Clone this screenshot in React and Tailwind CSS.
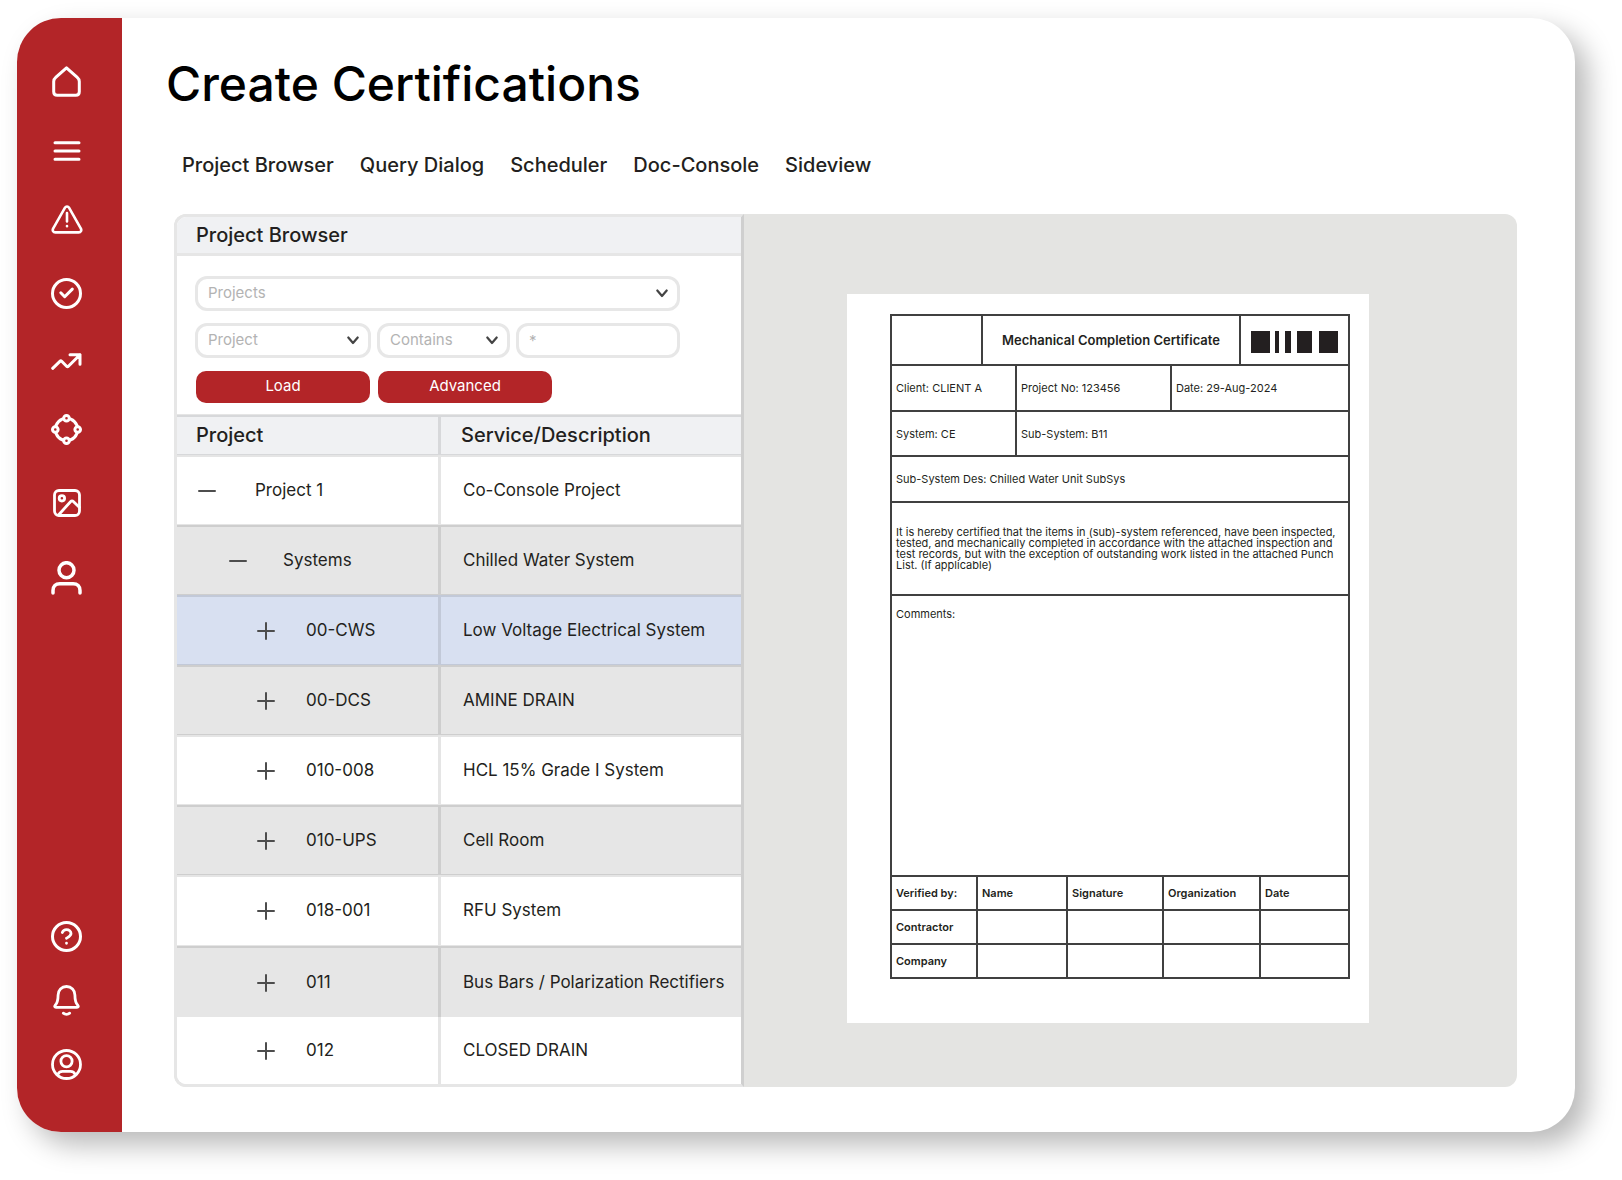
import React, { useState } from "react";

const HomeIcon = () => (
  <svg width="29" height="31" viewBox="0 0 29 31" fill="none" stroke="currentColor" strokeWidth="3" strokeLinecap="round" strokeLinejoin="round">
    <path d="M14.5 1.8 4 11.2c-1.6 1.4-2.3 2.6-2.3 4.4v10.2c0 2.2 1.3 3.5 3.5 3.5h18.6c2.2 0 3.5-1.3 3.5-3.5V15.6c0-1.8-.7-3-2.3-4.4Z" />
  </svg>
);

const MenuIcon = () => (
  <svg width="28" height="20" viewBox="0 0 28 20" fill="none" stroke="currentColor" strokeWidth="3" strokeLinecap="round">
    <path d="M2 1.7h24M2 10h24M2 18.3h24" />
  </svg>
);

const WarningIcon = () => (
  <svg width="32" height="29" viewBox="0 0 32 29" fill="none" stroke="currentColor" strokeWidth="2.6" strokeLinecap="round" strokeLinejoin="round">
    <path d="M14 2.7c.9-1.6 3.1-1.6 4 0l11.9 21c.9 1.800 0 3.700-2.200 3.700H4.300c-2.200 0-3.100-1.900-2.200-3.700Z" />
    <path d="M16 8v8.5M16 21v.3" />
  </svg>
);

const CheckIcon = () => (
  <svg width="31" height="31" viewBox="0 0 31 31" fill="none" stroke="currentColor" strokeWidth="3" strokeLinecap="round" strokeLinejoin="round">
    <circle cx="15.5" cy="15.5" r="14" />
    <path d="m9.8 14.8 3.900 3.900 7.600-7.600" />
  </svg>
);

const TrendIcon = () => (
  <svg width="31" height="17" viewBox="0 0 31 17" fill="none" stroke="currentColor" strokeWidth="3" strokeLinecap="round" strokeLinejoin="round">
    <path d="m1.7 15.3 7.2-7c.6-.6 1.200-.6 1.800 0l4.900 5c.6.6 1.200.6 1.800 0L29 1.700M19 1.700h10v9.600" />
  </svg>
);

const NetworkIcon = () => (
  <svg width="31" height="31" viewBox="0 0 31 31" fill="none" stroke="currentColor" strokeWidth="3">
    <circle cx="15.5" cy="15.5" r="11.2" />
    <g fill="#b32528">
      <circle cx="15.5" cy="4.3" r="2.8" />
      <circle cx="26.7" cy="15.5" r="2.8" />
      <circle cx="15.5" cy="26.7" r="2.8" />
      <circle cx="4.3" cy="15.5" r="2.8" />
    </g>
  </svg>
);

const ImageIcon = () => (
  <svg width="28" height="28" viewBox="0 0 28 28" fill="none" stroke="currentColor" strokeWidth="2.8" strokeLinecap="round" strokeLinejoin="round">
    <rect x="1.5" y="1.5" width="25" height="25" rx="4.5" />
    <circle cx="8.9" cy="9.3" r="2.7" />
    <path d="m5.5 26 12-13.3c1-1.1 2-1.1 3.100 0l5.700 5.600" />
  </svg>
);

const UserIcon = () => (
  <svg width="31" height="34" viewBox="0 0 31 34" fill="none" stroke="currentColor" strokeWidth="3.5" strokeLinecap="round">
    <circle cx="15.5" cy="9.2" r="7.5" />
    <path d="M2 32v-2.500C2 25.300 4.600 22.700 8.800 22.700h13.400c4.200 0 6.800 2.600 6.800 6.800V32" />
  </svg>
);

const HelpIcon = () => (
  <svg width="31" height="31" viewBox="0 0 31 31" fill="none" stroke="currentColor" strokeWidth="3" strokeLinecap="round">
    <circle cx="15.5" cy="15.5" r="14" />
    <path d="M11.3 11.5c.8-1.900 2.300-2.900 4.200-2.900 2.600 0 4.500 1.600 4.500 4 0 2.300-2 3.200-4.500 4.600M15.500 22.200v.1" strokeWidth="2.8" />
  </svg>
);

const BellIcon = () => (
  <svg width="27" height="31" viewBox="0 0 27 31" fill="none" stroke="currentColor" strokeWidth="2.8" strokeLinecap="round" strokeLinejoin="round">
    <path d="M13.500 1.500c-4.900 0-8.400 3.600-8.400 8.400 0 5.200-.6 7.800-2.900 10.400-.9 1.100-.5 2 .8 2h21c1.300 0 1.700-.9.800-2-2.300-2.600-2.900-5.200-2.900-10.400 0-4.800-3.500-8.400-8.400-8.400Z" />
    <path d="M10.300 28.200c1.800 1.500 4.600 1.500 6.400 0" />
  </svg>
);

const AccountIcon = () => (
  <svg width="31" height="31" viewBox="0 0 31 31" fill="none" stroke="currentColor" strokeWidth="2.8" strokeLinecap="round">
    <circle cx="15.5" cy="15.5" r="14" />
    <circle cx="15.5" cy="12.2" r="5.6" />
    <path d="M6.800 25.500c.9-2.200 2.400-3.200 4.700-3.200h8c2.300 0 3.800 1 4.700 3.200" />
  </svg>
);

const topIcons = [
  { name: "Home", Icon: HomeIcon },
  { name: "Menu", Icon: MenuIcon },
  { name: "Alerts", Icon: WarningIcon },
  { name: "Completed", Icon: CheckIcon },
  { name: "Trends", Icon: TrendIcon },
  { name: "Network", Icon: NetworkIcon },
  { name: "Images", Icon: ImageIcon },
  { name: "Users", Icon: UserIcon },
];

const bottomIcons = [
  { name: "Help", Icon: HelpIcon },
  { name: "Notifications", Icon: BellIcon },
  { name: "Account", Icon: AccountIcon },
];

const tabs = ["Project Browser", "Query Dialog", "Scheduler", "Doc-Console", "Sideview"];

const rows = [
  { level: 0, open: true, name: "Project 1", description: "Co-Console Project" },
  { level: 1, open: true, name: "Systems", description: "Chilled Water System" },
  { level: 2, open: false, name: "00-CWS", description: "Low Voltage Electrical System" },
  { level: 2, open: false, name: "00-DCS", description: "AMINE DRAIN" },
  { level: 2, open: false, name: "010-008", description: "HCL 15% Grade I System" },
  { level: 2, open: false, name: "010-UPS", description: "Cell Room" },
  { level: 2, open: false, name: "018-001", description: "RFU System" },
  { level: 2, open: false, name: "011", description: "Bus Bars / Polarization Rectifiers" },
  { level: 2, open: false, name: "012", description: "CLOSED DRAIN" },
];

const levelStyles = [
  "pl-[21px] gap-[39px]",
  "pl-[52px] gap-[36px]",
  "pl-[80px] gap-[31px]",
];

const Sidebar = () => (
  <aside className="flex w-[105px] shrink-0 flex-col justify-between bg-[#b32528] pt-[48px] pr-[6px] pb-[52px] text-white">
    <nav className="flex flex-col items-center gap-[44px]">
      {topIcons.map(({ name, Icon }) => (
        <button key={name} type="button" aria-label={name}>
          <Icon />
        </button>
      ))}
    </nav>
    <div className="flex flex-col items-center gap-[33px]">
      {bottomIcons.map(({ name, Icon }) => (
        <button key={name} type="button" aria-label={name}>
          <Icon />
        </button>
      ))}
    </div>
  </aside>
);

const SelectBox = ({ label, option, className }) => (
  <div className={`relative ${className}`}>
    <select
      aria-label={label}
      className="h-[35px] w-full appearance-none rounded-xl border-[3px] border-[#e7e7e7] bg-white pb-px pl-[10px] text-[15px] text-[#b3b3b3]"
    >
      <option>{option}</option>
    </select>
    <svg
      className="pointer-events-none absolute top-[13px] right-[12px]"
      width="12"
      height="9"
      viewBox="0 0 12 9"
      fill="none"
      stroke="#444"
      strokeWidth="2.2"
      strokeLinecap="round"
      strokeLinejoin="round"
    >
      <path d="m1.300 1.500 4.700 5.500 4.700-5.500" />
    </svg>
  </div>
);

const Filters = () => (
  <form
    className="border-b border-black/10 pt-5 pr-[61px] pb-[11px] pl-[18px]"
    onSubmit={(e) => e.preventDefault()}
  >
    <SelectBox label="Projects" option="Projects" className="w-full" />
    <div className="mt-3 flex gap-[6px]">
      <SelectBox label="Field" option="Project" className="w-[176px]" />
      <SelectBox label="Condition" option="Contains" className="w-[133px]" />
      <input
        type="text"
        aria-label="Value"
        placeholder="*"
        className="h-[35px] min-w-0 flex-1 rounded-xl border-[3px] border-[#e7e7e7] pb-px pl-[10px] text-[15px] placeholder:text-[#b3b3b3]"
      />
    </div>
    <div className="mt-[13px] flex gap-2 pl-px text-[15px] text-white">
      <button type="submit" className="h-8 w-[174px] rounded-[10px] bg-[#b32528] pb-[2px]">
        Load
      </button>
      <button type="button" className="h-8 w-[174px] rounded-[10px] bg-[#b32528] pb-[2px]">
        Advanced
      </button>
    </div>
  </form>
);

const ProjectTable = () => {
  const [selected, setSelected] = useState("00-CWS");

  const rowColor = (name, index) => {
    if (name === selected) return "bg-[#d8e0f1]";
    return index % 2 === 1 ? "bg-[#e6e6e6]" : "bg-white";
  };

  // the last two rows meet without a line between them
  const rowLine = (index) => {
    if (index === rows.length - 1) return "h-[67px]";
    if (index === rows.length - 2) return "h-[71px] border-t-2";
    if (index === rows.length - 3) return "h-[71px] border-t-2 border-b";
    return "h-[70px] border-t-2 border-b";
  };

  return (
    <table className="w-full table-fixed border-separate border-spacing-0 text-left">
      <thead>
        <tr className="h-[40px] bg-[#f0f1f3] text-[20px] leading-6">
          <th className="w-[264px] border-t-2 border-r-[3px] border-b border-black/10 pb-[2px] pl-[19px] font-medium">
            Project
          </th>
          <th className="border-t-2 border-b border-black/10 pb-[2px] pl-[20px] font-medium">
            Service/Description
          </th>
        </tr>
      </thead>
      <tbody>
        {rows.map((row, index) => {
          const line = rowLine(index);
          const color = rowColor(row.name, index);
          return (
            <tr key={row.name} className="text-[17px]" onClick={() => setSelected(row.name)}>
              <td className={`border-r-[3px] border-black/10 ${line} ${color}`}>
                <div className={`flex items-center ${levelStyles[row.level]}`}>
                  <button type="button" aria-label={row.open ? "Collapse" : "Expand"}>
                    <svg width="18" height="18" viewBox="0 0 18 18" stroke="#4d4d4d" strokeWidth="2" strokeLinecap="round">
                      <path d={row.open ? "M1 9h16" : "M1 9h16M9 1v16"} />
                    </svg>
                  </button>
                  <span>{row.name}</span>
                </div>
              </td>
              <td className={`border-black/10 pl-[22px] whitespace-nowrap ${line} ${color}`}>
                {row.description}
              </td>
            </tr>
          );
        })}
      </tbody>
    </table>
  );
};

const Barcode = () => (
  <svg width="87" height="22" viewBox="0 0 87 22" fill="#231f20">
    <rect x="0" width="19" height="22" />
    <rect x="24" width="4" height="22" />
    <rect x="34" width="6" height="22" />
    <rect x="46" width="15" height="22" />
    <rect x="68" width="19" height="22" />
  </svg>
);

const Certificate = () => (
  <article className="bg-white pt-5 pr-[19px] pb-[44px] pl-[43px] text-[11px] leading-3">
    <div className="border-2 border-[#404040]">
      <div className="flex h-[50px] border-b-2 border-[#404040]">
        <div className="w-[91px] border-r-2 border-[#404040]" />
        <h2 className="flex flex-1 items-center justify-center text-[13px] font-semibold whitespace-nowrap">
          Mechanical Completion Certificate
        </h2>
        <div className="flex w-[109px] items-center justify-center border-l-2 border-[#404040] pt-1">
          <Barcode />
        </div>
      </div>
      <div className="flex h-[46px] items-stretch border-b-2 border-[#404040]">
        <p className="flex w-[125px] items-center border-r-2 border-[#404040] pl-1">Client: CLIENT A</p>
        <p className="flex w-[155px] items-center border-r-2 border-[#404040] pl-1">Project No: 123456</p>
        <p className="flex flex-1 items-center pl-1">Date: 29-Aug-2024</p>
      </div>
      <div className="flex h-[45px] items-stretch border-b-2 border-[#404040]">
        <p className="flex w-[125px] items-center border-r-2 border-[#404040] pl-1">System: CE</p>
        <p className="flex flex-1 items-center pl-1">Sub-System: B11</p>
      </div>
      <p className="flex h-[46px] items-center border-b-2 border-[#404040] pl-1">
        Sub-System Des: Chilled Water Unit SubSys
      </p>
      <p className="flex h-[93px] items-center border-b-2 border-[#404040] pr-3 pl-1 leading-[11px]">
        It is hereby certified that the items in (sub)-system referenced, have been inspected,
        tested, and mechanically completed in accordance with the attached inspection and test
        records, but with the exception of outstanding work listed in the attached Punch List. (If
        applicable)
      </p>
      <p className="h-[281px] border-b-2 border-[#404040] pt-3 pl-1">Comments:</p>
      <table className="w-full table-fixed border-separate border-spacing-0 text-left">
        <thead>
          <tr className="h-[34px]">
            <th className="w-[86px] border-r-2 border-b-2 border-[#404040] pl-1 font-semibold">Verified by:</th>
            <th className="w-[90px] border-r-2 border-b-2 border-[#404040] pl-1 font-semibold">Name</th>
            <th className="w-[96px] border-r-2 border-b-2 border-[#404040] pl-1 font-semibold">Signature</th>
            <th className="w-[97px] border-r-2 border-b-2 border-[#404040] pl-1 font-semibold">Organization</th>
            <th className="border-b-2 border-[#404040] pl-1 font-semibold">Date</th>
          </tr>
        </thead>
        <tbody>
          <tr className="h-[34px]">
            <th className="border-r-2 border-b-2 border-[#404040] pl-1 font-semibold">Contractor</th>
            <td className="border-r-2 border-b-2 border-[#404040]" />
            <td className="border-r-2 border-b-2 border-[#404040]" />
            <td className="border-r-2 border-b-2 border-[#404040]" />
            <td className="border-b-2 border-[#404040]" />
          </tr>
          <tr className="h-[32px]">
            <th className="border-r-2 border-[#404040] pl-1 font-semibold">Company</th>
            <td className="border-r-2 border-[#404040]" />
            <td className="border-r-2 border-[#404040]" />
            <td className="border-r-2 border-[#404040]" />
            <td />
          </tr>
        </tbody>
      </table>
    </div>
  </article>
);

const App = () => {
  return (
    <div className="flex min-h-screen bg-white pt-[18px] pr-[47px] pb-[48px] pl-[17px] font-['Inter',sans-serif] text-[#231f20]">
      <div className="flex flex-1 overflow-hidden rounded-[44px] bg-white shadow-[13px_13px_28px_rgba(0,0,0,0.28)]">
        <Sidebar />
        <main className="flex min-w-0 flex-1 flex-col pt-[38px] pr-[58px] pb-[45px] pl-[52px]">
          <h1 className="-ml-2 text-[48px] leading-[56px] font-medium text-black">Create Certifications</h1>
          <nav className="mt-[39px] flex gap-[26px] pl-2 text-[20px] leading-7 font-medium">
            {tabs.map((tab) => (
              <a key={tab} href="#">
                {tab}
              </a>
            ))}
          </nav>

          <div className="mt-[35px] flex flex-1 overflow-hidden rounded-xl bg-[#e4e4e2]">
            {/* project browser */}
            <section className="w-[570px] shrink-0 overflow-hidden rounded-l-xl border-[3px] border-[#e6e6e6] border-r-[#cfcfcf] bg-white">
              <h2 className="flex h-[39px] items-center border-b-[3px] border-[#e6e6e6] bg-[#f0f1f3] pl-[19px] text-[20px] leading-6 font-medium">
                Project Browser
              </h2>
              <Filters />
              <ProjectTable />
            </section>

            {/* document preview */}
            <section className="min-w-0 flex-1 pt-20 pr-[148px] pb-16 pl-[103px]">
              <Certificate />
            </section>
          </div>
        </main>
      </div>
    </div>
  );
};

export default App;
